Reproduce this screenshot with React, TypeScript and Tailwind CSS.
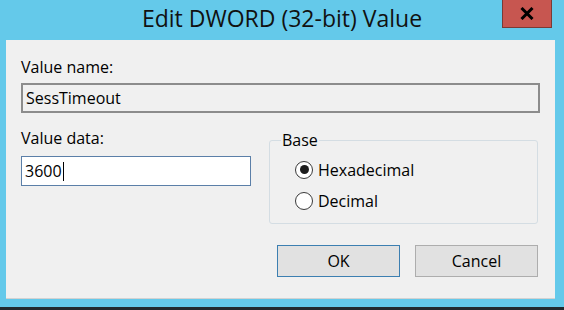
import React from 'react';

const font = { fontFamily: '"Open Sans", "Noto Sans", Arial, sans-serif' };

const Radio = ({ checked, label }: { checked?: boolean; label: string }) => (
  <label className="flex items-center h-[31px]">
    <span className="w-[18px] h-[18px] rounded-full border border-[#3a3a3a] bg-white flex items-center justify-center shrink-0">
      {checked && <span className="w-[9px] h-[9px] rounded-full bg-[#1c1c1c]" />}
    </span>
    <span className="ml-[5px] text-[16px] leading-none text-black">{label}</span>
  </label>
);

export default function App() {
  return (
    <div className="w-[564px] h-[310px] bg-[#64c9ea] flex flex-col overflow-hidden" style={font}>
      {/* Title bar */}
      <div className="h-[40px] grid grid-cols-[1fr_auto_1fr] items-start">
        <div />
        <div className="pt-[4px] text-[23px] leading-[29px] text-[#111] whitespace-nowrap">
          Edit DWORD (32-bit) Value
        </div>
        <div className="flex justify-end pr-[12px]">
          <button className="w-[50px] h-[28px] bg-[#c75650] border border-[#7a3a36] border-t-0 flex items-center justify-center">
            <svg width="14" height="13" viewBox="0 0 14 13">
              <path d="M1.5 1 L12.5 12 M12.5 1 L1.5 12" stroke="#000" strokeWidth="3" />
            </svg>
          </button>
        </div>
      </div>

      {/* Client area */}
      <div className="ml-[6px] w-[549px] h-[259px] bg-[#f0f0f0] border-b border-[#d2d2d2] pl-[15px] pr-[15px] pt-[16px] text-black">
        <div className="text-[16px] leading-[22px]">Value name:</div>
        <div className="mt-[5px] h-[30px] w-full border-2 border-[#8c8c8c] bg-[#f0f0f0] flex items-center pl-[3px] text-[16px]">
          SessTimeout
        </div>

        <div className="mt-[14px] flex">
          <div className="w-[248px]">
            <div className="text-[16px] leading-[22px]">Value data:</div>
            <div className="mt-[7px] h-[30px] w-[230px] border border-[#5b7fa8] bg-white flex items-center pl-[3px] text-[16px]">
              3600
              <span className="w-px h-[19px] bg-black ml-[1px]" />
            </div>
          </div>
          <fieldset className="w-[269px] h-[92px] border border-[#d4dde3] rounded-[3px] pl-[25px] pr-[20px] pb-[6px] pt-0 mt-[5px]">
            <legend className="text-[16px] leading-[16px] px-[1px] -ml-[14px]">Base</legend>
            <div className="mt-[6px]">
              <Radio checked label="Hexadecimal" />
              <Radio label="Decimal" />
            </div>
          </fieldset>
        </div>

        <div className="mt-[21px] flex justify-end gap-[15px] pr-[2px]">
          <button className="w-[123px] h-[32px] bg-[#e1e1e1] border border-[#3c7fb1] text-[16px] leading-none">
            OK
          </button>
          <button className="w-[123px] h-[32px] bg-[#e1e1e1] border border-[#adadad] text-[16px] leading-none">
            Cancel
          </button>
        </div>
      </div>

      <div className="h-[8px]" />
      <div className="flex-1 bg-[#222a2f]" />
    </div>
  );
}
